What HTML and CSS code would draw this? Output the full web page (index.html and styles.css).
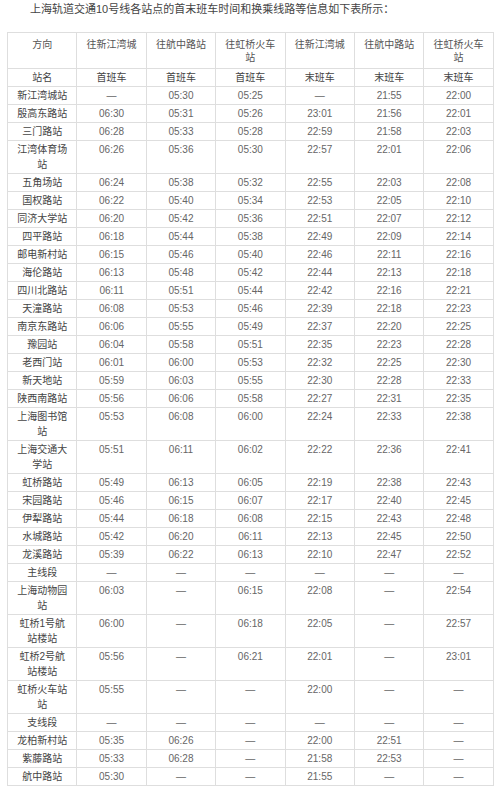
FILE: index.html
```html
<!DOCTYPE html>
<html lang="zh">
<head>
<meta charset="utf-8">
<link rel="stylesheet" href="styles.css">
</head>
<body>
<div class="page">
<p class="intro">上海轨道交通10号线各站点的首末班车时间和换乘线路等信息如下表所示：</p>
<table class="timetable">
<colgroup><col><col><col><col><col><col><col></colgroup>
<thead>
<tr><th>方向</th><th>往新江湾城</th><th>往航中路站</th><th>往虹桥火车站</th><th>往新江湾城</th><th>往航中路站</th><th>往虹桥火车站</th></tr>
</thead>
<tbody>
<tr><td class="st">站名</td><td class="st">首班车</td><td class="st">首班车</td><td class="st">首班车</td><td class="st">末班车</td><td class="st">末班车</td><td class="st">末班车</td></tr>
<tr><td class="st">新江湾城站</td><td>—</td><td>05:30</td><td>05:25</td><td>—</td><td>21:55</td><td>22:00</td></tr>
<tr><td class="st">殷高东路站</td><td>06:30</td><td>05:31</td><td>05:26</td><td>23:01</td><td>21:56</td><td>22:01</td></tr>
<tr><td class="st">三门路站</td><td>06:28</td><td>05:33</td><td>05:28</td><td>22:59</td><td>21:58</td><td>22:03</td></tr>
<tr><td class="st">江湾体育场站</td><td>06:26</td><td>05:36</td><td>05:30</td><td>22:57</td><td>22:01</td><td>22:06</td></tr>
<tr><td class="st">五角场站</td><td>06:24</td><td>05:38</td><td>05:32</td><td>22:55</td><td>22:03</td><td>22:08</td></tr>
<tr><td class="st">国权路站</td><td>06:22</td><td>05:40</td><td>05:34</td><td>22:53</td><td>22:05</td><td>22:10</td></tr>
<tr><td class="st">同济大学站</td><td>06:20</td><td>05:42</td><td>05:36</td><td>22:51</td><td>22:07</td><td>22:12</td></tr>
<tr><td class="st">四平路站</td><td>06:18</td><td>05:44</td><td>05:38</td><td>22:49</td><td>22:09</td><td>22:14</td></tr>
<tr><td class="st">邮电新村站</td><td>06:15</td><td>05:46</td><td>05:40</td><td>22:46</td><td>22:11</td><td>22:16</td></tr>
<tr><td class="st">海伦路站</td><td>06:13</td><td>05:48</td><td>05:42</td><td>22:44</td><td>22:13</td><td>22:18</td></tr>
<tr><td class="st">四川北路站</td><td>06:11</td><td>05:51</td><td>05:44</td><td>22:42</td><td>22:16</td><td>22:21</td></tr>
<tr><td class="st">天潼路站</td><td>06:08</td><td>05:53</td><td>05:46</td><td>22:39</td><td>22:18</td><td>22:23</td></tr>
<tr><td class="st">南京东路站</td><td>06:06</td><td>05:55</td><td>05:49</td><td>22:37</td><td>22:20</td><td>22:25</td></tr>
<tr><td class="st">豫园站</td><td>06:04</td><td>05:58</td><td>05:51</td><td>22:35</td><td>22:23</td><td>22:28</td></tr>
<tr><td class="st">老西门站</td><td>06:01</td><td>06:00</td><td>05:53</td><td>22:32</td><td>22:25</td><td>22:30</td></tr>
<tr><td class="st">新天地站</td><td>05:59</td><td>06:03</td><td>05:55</td><td>22:30</td><td>22:28</td><td>22:33</td></tr>
<tr><td class="st">陕西南路站</td><td>05:56</td><td>06:06</td><td>05:58</td><td>22:27</td><td>22:31</td><td>22:35</td></tr>
<tr><td class="st">上海图书馆站</td><td>05:53</td><td>06:08</td><td>06:00</td><td>22:24</td><td>22:33</td><td>22:38</td></tr>
<tr><td class="st">上海交通大学站</td><td>05:51</td><td>06:11</td><td>06:02</td><td>22:22</td><td>22:36</td><td>22:41</td></tr>
<tr><td class="st">虹桥路站</td><td>05:49</td><td>06:13</td><td>06:05</td><td>22:19</td><td>22:38</td><td>22:43</td></tr>
<tr><td class="st">宋园路站</td><td>05:46</td><td>06:15</td><td>06:07</td><td>22:17</td><td>22:40</td><td>22:45</td></tr>
<tr><td class="st">伊犁路站</td><td>05:44</td><td>06:18</td><td>06:08</td><td>22:15</td><td>22:43</td><td>22:48</td></tr>
<tr><td class="st">水城路站</td><td>05:42</td><td>06:20</td><td>06:11</td><td>22:13</td><td>22:45</td><td>22:50</td></tr>
<tr><td class="st">龙溪路站</td><td>05:39</td><td>06:22</td><td>06:13</td><td>22:10</td><td>22:47</td><td>22:52</td></tr>
<tr><td class="st">主线段</td><td>—</td><td>—</td><td>—</td><td>—</td><td>—</td><td>—</td></tr>
<tr><td class="st">上海动物园站</td><td>06:03</td><td>—</td><td>06:15</td><td>22:08</td><td>—</td><td>22:54</td></tr>
<tr><td class="st">虹桥1号航站楼站</td><td>06:00</td><td>—</td><td>06:18</td><td>22:05</td><td>—</td><td>22:57</td></tr>
<tr><td class="st">虹桥2号航站楼站</td><td>05:56</td><td>—</td><td>06:21</td><td>22:01</td><td>—</td><td>23:01</td></tr>
<tr><td class="st">虹桥火车站站</td><td>05:55</td><td>—</td><td>—</td><td>22:00</td><td>—</td><td>—</td></tr>
<tr><td class="st">支线段</td><td>—</td><td>—</td><td>—</td><td>—</td><td>—</td><td>—</td></tr>
<tr><td class="st">龙柏新村站</td><td>05:35</td><td>06:26</td><td>—</td><td>22:00</td><td>22:51</td><td>—</td></tr>
<tr><td class="st">紫藤路站</td><td>05:33</td><td>06:28</td><td>—</td><td>21:58</td><td>22:53</td><td>—</td></tr>
<tr><td class="st">航中路站</td><td>05:30</td><td>—</td><td>—</td><td>21:55</td><td>—</td><td>—</td></tr>
</tbody>
</table>
</div>
</body>
</html>
```

FILE: styles.css
```css
html, body {
  margin: 0;
  padding: 0;
  background: #ffffff;
}

body {
  font-family: "Liberation Sans", "Noto Sans CJK SC", sans-serif;
  color: #555;
}

.page {
  padding: 0 7px;
}

.intro {
  margin: 0;
  padding: 0 0 0 1px;
  font-size: 11px;
  line-height: 18px;
  text-indent: 22px;
  color: #444;
}

.timetable {
  margin-top: 14px;
  width: 486px;
  table-layout: fixed;
  border-collapse: collapse;
  font-size: 10px;
}

.timetable col {
  width: 69.4px;
}

.timetable th,
.timetable td {
  border: 1px solid #dedede;
  text-align: center;
  vertical-align: top;
  padding: 1px 8px;
  line-height: 15px;
  font-weight: normal;
  color: #666;
}

.timetable th {
  padding: 5px 8px 4px;
  line-height: 13px;
  color: #555;
}

.timetable td.st {
  color: #444;
}
```
